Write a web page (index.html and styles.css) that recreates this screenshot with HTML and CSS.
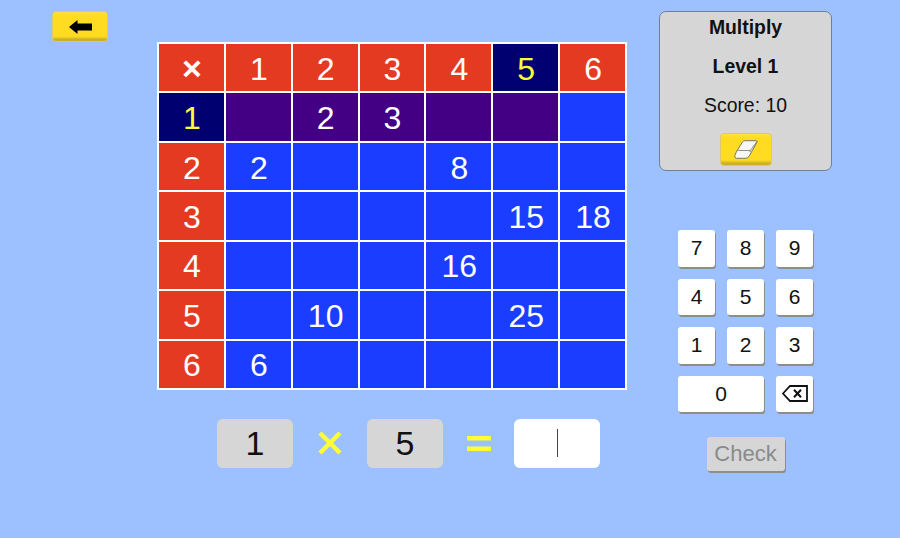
FILE: index.html
```html
<!DOCTYPE html>
<html lang="en">
<head>
<meta charset="UTF-8">
<meta name="viewport" content="width=device-width, initial-scale=1.0">
<title>Multiply</title>
<link rel="stylesheet" href="styles.css">
</head>
<body>
<div class="page">
    <button class="yellow-btn back-btn" aria-label="Back">
        <svg width="23" height="14" viewBox="0 0 23 14"><path d="M0 7 L8.5 0 V3.5 H23 V10.5 H8.5 V14 Z" fill="#000"/></svg>
    </button>

    <div class="board">
        <div class="grid">
            <div class="cell head"><span class="times-head">×</span></div><div class="cell head">1</div><div class="cell head">2</div><div class="cell head">3</div><div class="cell head">4</div><div class="cell active">5</div><div class="cell head">6</div>

            <div class="cell active">1</div><div class="cell hilite"></div><div class="cell hilite">2</div><div class="cell hilite">3</div><div class="cell hilite"></div><div class="cell hilite"></div><div class="cell"></div>

            <div class="cell head">2</div><div class="cell">2</div><div class="cell"></div><div class="cell"></div><div class="cell">8</div><div class="cell"></div><div class="cell"></div>

            <div class="cell head">3</div><div class="cell"></div><div class="cell"></div><div class="cell"></div><div class="cell"></div><div class="cell">15</div><div class="cell">18</div>

            <div class="cell head">4</div><div class="cell"></div><div class="cell"></div><div class="cell"></div><div class="cell">16</div><div class="cell"></div><div class="cell"></div>

            <div class="cell head">5</div><div class="cell"></div><div class="cell">10</div><div class="cell"></div><div class="cell"></div><div class="cell">25</div><div class="cell"></div>

            <div class="cell head">6</div><div class="cell">6</div><div class="cell"></div><div class="cell"></div><div class="cell"></div><div class="cell"></div><div class="cell"></div>
        </div>

        <div class="equation">
            <div class="factor">1</div>
            <svg class="sign times" width="24" height="24" viewBox="0 0 24 24"><path d="M2 2 L22 22 M22 2 L2 22" stroke="#ffff33" stroke-width="4.5" fill="none"/></svg>
            <div class="factor">5</div>
            <svg class="sign equals" width="24" height="15" viewBox="0 0 24 15"><path d="M0 0 H24 V4.5 H0 Z M0 10.5 H24 V15 H0 Z" fill="#ffff33"/></svg>
            <div class="answer"><span class="caret"></span></div>
        </div>
    </div>

    <div class="side">
        <div class="panel">
            <div class="panel-line bold">Multiply</div>
            <div class="panel-line bold">Level 1</div>
            <div class="panel-line">Score: 10</div>
            <button class="yellow-btn eraser-btn" aria-label="Clear">
                <svg width="24" height="19" viewBox="0 0 24 19">
                    <path d="M8.5 2 Q9.5 0.7 11 0.7 H22.5 Q23.6 0.7 23 2 L15.5 15.5 Q14 18.3 12 18.3 H2.5 Q0.3 18.3 0.8 15.5 L2.5 11.5 Z" fill="#f7f7f7" stroke="#77775f" stroke-width="1"/>
                    <path d="M2.5 11.5 Q3 10.5 4.5 10.5 H15 Q16.5 10.5 16 12 M16 11 L23 1.5" fill="none" stroke="#77775f" stroke-width="0.8"/>
                </svg>
            </button>
        </div>

        <div class="keypad">
            <button class="key">7</button><button class="key">8</button><button class="key">9</button>
            <button class="key">4</button><button class="key">5</button><button class="key">6</button>
            <button class="key">1</button><button class="key">2</button><button class="key">3</button>
            <button class="key zero">0</button>
            <button class="key" aria-label="Backspace">
                <svg width="26" height="17" viewBox="0 0 26 17"><path d="M1 8.5 L8 1 H25 V16 H8 Z" fill="none" stroke="#111" stroke-width="1.8"/><path d="M12 4.8 L19 12.2 M19 4.8 L12 12.2" fill="none" stroke="#111" stroke-width="2"/></svg>
            </button>
        </div>

        <button class="check-btn">Check</button>
    </div>
</div>
</body>
</html>
```

FILE: styles.css
```css
* {
    box-sizing: border-box;
}

html, body {
    margin: 0;
    height: 100%;
}

body {
    background-color: #9dc1ff;
    font-family: "Liberation Sans", Arial, sans-serif;
    color: #111;
    overflow: hidden;
}

button {
    font-family: inherit;
    padding: 0;
    border: none;
    cursor: pointer;
}

.page {
    display: flex;
    align-items: flex-start;
    padding: 11px 0 0 52px;
}

.yellow-btn {
    display: flex;
    align-items: center;
    justify-content: center;
    background: linear-gradient(#ffe23a, #ffdc22 15%, #ffdc22 84%, #cdb02a 94%);
    border: 1px solid #dcc872;
    border-radius: 4px;
}

.back-btn {
    width: 56px;
    height: 31px;
    margin-right: 49px;
}

/* times table */
.board {
    margin-top: 31px;
    width: 470px;
}

.grid {
    display: grid;
    grid-template-columns: repeat(7, 1fr);
    grid-auto-rows: 47.43px;
    gap: 2px;
    padding: 2px;
    background-color: #fff;
}

.cell {
    display: flex;
    align-items: center;
    justify-content: center;
    padding: 3px 0 0 1px;
    background-color: #1a3dff;
    color: #fff;
    font-size: 32px;
}

.times-head {
    font-size: 34px;
    font-weight: bold;
    line-height: 1;
    margin-top: -3px;
}

.head {
    background-color: #e53a22;
}

.hilite {
    background-color: #440085;
}

.active {
    background-color: #000070;
    color: #ffff33;
}

.equation {
    display: flex;
    align-items: center;
    margin-top: 29px;
    margin-left: 60px;
}

.factor, .answer {
    display: flex;
    align-items: center;
    justify-content: center;
    height: 49px;
    border-radius: 6px;
    font-size: 34px;
}

.factor {
    width: 76px;
    background-color: #d6d6d6;
}

.answer {
    width: 86px;
    margin-left: -1px;
    background-color: #fff;
}

.caret {
    width: 1px;
    height: 28px;
    background-color: #444;
}

.sign {
    flex: none;
}

.times {
    margin: 0 25px 0 25px;
}

.equals {
    margin: 0 24px 0 24px;
}

/* right column */
.side {
    display: flex;
    flex-direction: column;
    align-items: center;
    width: 173px;
    margin-left: 32px;
}

.panel {
    display: flex;
    flex-direction: column;
    align-items: center;
    width: 173px;
    height: 160px;
    padding-top: 5px;
    background-color: #d6d6d6;
    border: 1px solid #6f7f99;
    border-radius: 7px;
}

.panel-line {
    height: 39px;
    line-height: 20px;
    font-size: 19.4px;
}

.bold {
    font-weight: bold;
}

.eraser-btn {
    width: 52px;
    height: 33px;
    margin-top: -1px;
}

.keypad {
    display: grid;
    grid-template-columns: repeat(3, 37px);
    grid-auto-rows: 36.5px;
    column-gap: 12px;
    row-gap: 12px;
    margin-top: 59px;
}

.key {
    display: flex;
    align-items: center;
    justify-content: center;
    background-color: #fff;
    border-radius: 3px;
    box-shadow: 1px 2px 0 #8d8d8d;
    color: #111;
    font-size: 21px;
}

.zero {
    grid-column: span 2;
}

.check-btn {
    width: 78px;
    height: 34px;
    margin-top: 25px;
    background-color: #d6d6d6;
    border-radius: 3px;
    box-shadow: 1px 2px 0 #8d8d8d;
    color: #8a8a8a;
    font-size: 22px;
}
```
